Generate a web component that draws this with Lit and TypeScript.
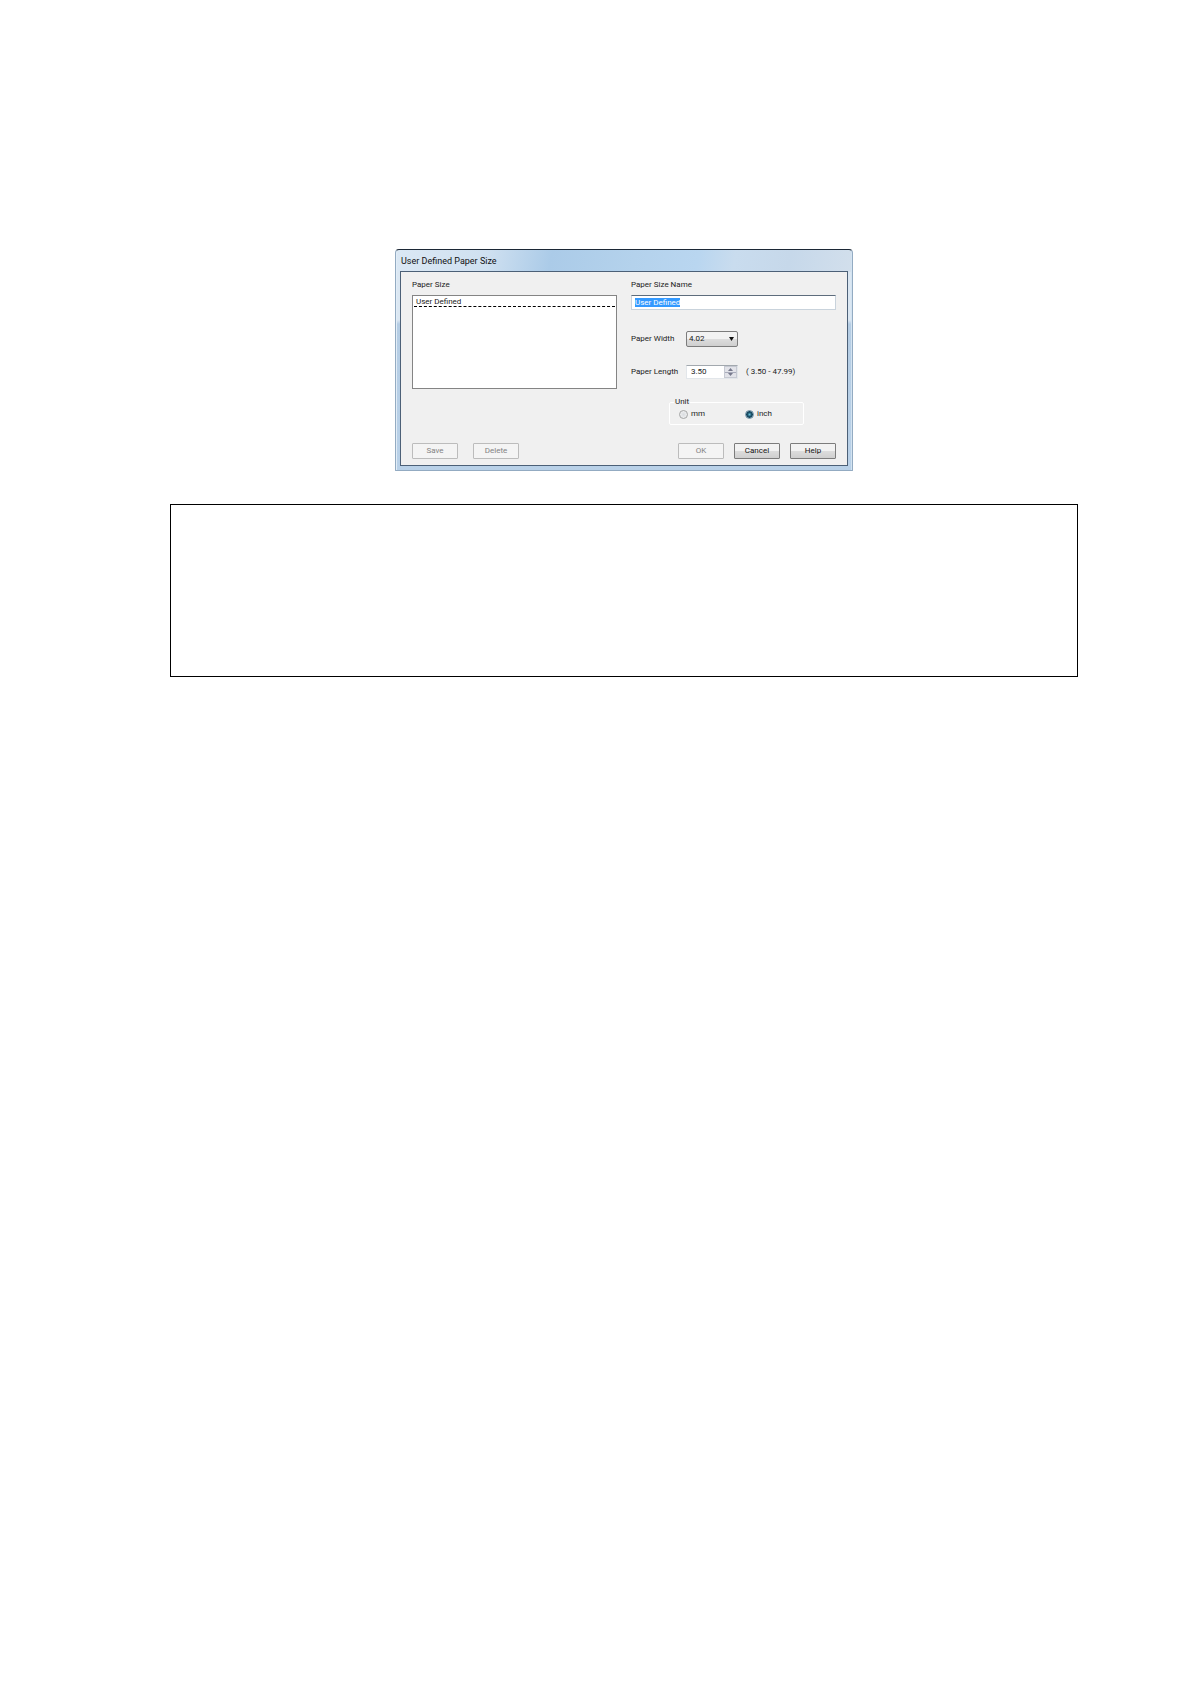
import { html, css, LitElement } from 'lit'
import { customElement, query } from 'lit/decorators.js'

@customElement('paper-size-dialog')
export class PaperSizeDialog extends LitElement {
  static styles = css`
    :host {
      display: block;
      font-family: Roboto, "Open Sans", sans-serif;
      font-size: 8px;
      line-height: 12px;
      color: #222;
    }

    * {
      box-sizing: border-box;
    }

    .window {
      border: 1px solid #93abc2;
      border-top: 1px solid #1c2836;
      border-radius: 4px 4px 1px 1px;
      padding: 0 4px 4px;
      background:
        linear-gradient(100deg, #dbe8f4 0, #cfe0f0 20%, #abcbe8 34%, #b4d2ec 52%, #b9d6f0 66%, #c9dcee 74%, #c6d8ea 86%, #d2dfec 100%) top / 100% 22px no-repeat,
        linear-gradient(#dbe7f2 70px, #b5cde4 74px, #b9d1e8);
      box-shadow: inset 1px 0 #e2edf7, inset -1px 0 #d3e3f1;
    }

    .title {
      margin: 0;
      padding: 5px 1px 4px;
      font-size: 9px;
      font-weight: 400;
      line-height: 12px;
      color: #111;
    }

    .client {
      border: 1px solid #4c6077;
      padding: 7px 11px 6px;
      background: #f0f0f0;
    }

    .columns {
      display: grid;
      grid-template-columns: 1fr 1fr;
      gap: 14px;
    }

    .column {
      display: flex;
      flex-direction: column;
    }

    input,
    select,
    button {
      margin: 0;
      font: inherit;
      color: inherit;
      outline: none;
    }

    .list {
      height: 94px;
      margin-top: 4px;
      padding: 1px;
      border: 1px solid #848484;
      border-radius: 0;
      background: #fff;
      overflow: hidden;
    }

    .list option {
      min-height: 0;
      padding: 0 2px;
      border-bottom: 1px dashed #000;
      line-height: 11px;
    }

    .name {
      height: 15px;
      margin: 4px 0 21px;
      padding: 0 3px;
      border: 1px solid #c9d3dc;
      border-top-color: #5d6c7c;
      background: #fff;
    }

    .name::selection {
      background: #3399ff;
      color: #fff;
    }

    .row {
      display: flex;
      align-items: center;
      height: 16px;
    }

    .row + .row {
      margin-top: 17px;
    }

    .row label {
      width: 55px;
    }

    .drop {
      position: relative;
      width: 52px;
      height: 16px;
    }

    .drop select {
      width: 100%;
      height: 100%;
      padding: 0 2px;
      border: 1px solid #7c7c7c;
      border-radius: 2px;
      appearance: none;
      background: linear-gradient(#f2f2f2 50%, #dddddd 50%, #cfcfcf);
    }

    .drop svg {
      position: absolute;
      right: 4px;
      top: 6px;
      pointer-events: none;
    }

    .spin {
      display: flex;
      width: 52px;
      height: 14px;
      border: 1px solid #e2e6ea;
      border-top-color: #a2a8ae;
      background: #fff;
    }

    .spin input {
      flex: 1;
      min-width: 0;
      padding: 0 4px;
      border: 0;
      background: none;
      appearance: textfield;
    }

    .spin input::-webkit-inner-spin-button {
      display: none;
    }

    .arrows {
      display: flex;
      flex-direction: column;
      width: 13px;
      border: 1px solid #c6c9d2;
      background: #e2e3e9;
    }

    .arrows button {
      display: flex;
      flex: 1;
      align-items: center;
      justify-content: center;
      min-height: 0;
      padding: 0;
      border: 0;
      background: none;
    }

    .arrows button + button {
      border-top: 1px solid #a9acbb;
    }

    .range {
      margin-left: 8px;
    }

    .unit {
      display: grid;
      grid-template-columns: 66px 1fr;
      width: 135px;
      height: 29px;
      min-width: 0;
      margin: 16px 0 0 38px;
      padding: 0 9px;
      border: 1px solid #fff;
      border-radius: 2px;
      outline: 1px solid #e6e6e6;
      outline-offset: -2px;
      outline: none;
    }

    .unit legend {
      margin-left: -5px;
      padding: 0 1px;
    }

    .unit label {
      display: flex;
      align-items: center;
      gap: 3px;
      height: 12px;
    }

    .unit input {
      width: 9px;
      height: 9px;
      border: 1px solid #a3a4a4;
      border-radius: 50%;
      appearance: none;
      background: radial-gradient(#d9dce0, #f6f6f6);
    }

    .unit input:checked {
      border-color: #6d8fa3;
      background: radial-gradient(circle, #6cc4dc 0, #1d5068 2px, #17475e 3px, #dceaf2 4px);
    }

    .actions {
      display: flex;
      gap: 10px;
      margin-top: 18px;
    }

    .actions button {
      width: 46px;
      height: 16px;
      padding: 0;
      border: 1px solid #7c7c7c;
      border-radius: 1px;
      background: linear-gradient(#f2f2f2 50%, #dddddd 50%, #cfcfcf);
      color: #111;
    }

    .actions button:disabled {
      border-color: #bcbcbc;
      background: #f4f4f4;
      color: #838383;
    }

    .actions .delete {
      margin: 0 auto 0 5px;
    }
  `

  @query('.name') nameInput!: HTMLInputElement
  @query('#length') lengthInput!: HTMLInputElement

  firstUpdated () {
    this.nameInput.focus()
    this.nameInput.select()
  }

  step (direction: number) {
    const next = Number(this.lengthInput.value) + direction * 0.01
    this.lengthInput.value = Math.min(47.99, Math.max(3.5, next)).toFixed(2)
  }

  renderActions () {
    return html`
      <div class="actions">
        <button type="button" disabled>Save</button>
        <button type="button" class="delete" disabled>Delete</button>
        <button type="button" disabled>OK</button>
        <button type="button">Cancel</button>
        <button type="button">Help</button>
      </div>
    `
  }

  render () {
    return html`
      <section class="window" role="dialog" aria-labelledby="title">
        <h1 class="title" id="title">User Defined Paper Size</h1>
        <div class="client">
          <div class="columns">
            <div class="column">
              <label for="sizes">Paper Size</label>
              <select class="list" id="sizes" size="4">
                <option>User Defined</option>
              </select>
            </div>
            <div class="column">
              <label for="name">Paper Size Name</label>
              <input class="name" id="name" type="text" value="User Defined">
              <div class="row">
                <label for="width">Paper Width</label>
                <div class="drop">
                  <select id="width">
                    <option>4.02</option>
                  </select>
                  <svg width="5" height="4" viewBox="0 0 5 4" aria-hidden="true">
                    <path d="M0 0h5L2.5 4z" fill="#111" />
                  </svg>
                </div>
              </div>
              <div class="row">
                <label for="length">Paper Length</label>
                <div class="spin">
                  <input id="length" type="number" min="3.50" max="47.99" step="0.01" value="3.50">
                  <div class="arrows">
                    <button type="button" aria-label="Increase" @click="${() => this.step(1)}">
                      <svg width="5" height="3" viewBox="0 0 5 3"><path d="M0 3h5L2.5 0z" fill="#77798c" /></svg>
                    </button>
                    <button type="button" aria-label="Decrease" @click="${() => this.step(-1)}">
                      <svg width="5" height="3" viewBox="0 0 5 3"><path d="M0 0h5L2.5 3z" fill="#77798c" /></svg>
                    </button>
                  </div>
                </div>
                <span class="range">( 3.50 - 47.99)</span>
              </div>
              <fieldset class="unit">
                <legend>Unit</legend>
                <label><input type="radio" name="unit" value="mm">mm</label>
                <label><input type="radio" name="unit" value="inch" checked>inch</label>
              </fieldset>
            </div>
          </div>
          ${this.renderActions()}
        </div>
      </section>
    `
  }
}

@customElement('app-root')
export class AppRoot extends LitElement {
  static styles = css`
    :host {
      display: block;
      min-height: 100vh;
      box-sizing: border-box;
      padding: 249px 112px 40px 170px;
      background: #fff;
    }

    paper-size-dialog {
      max-width: 458px;
      margin: 0 auto;
    }

    .note {
      box-sizing: border-box;
      min-height: 173px;
      margin-top: 33px;
      border: 1px solid #000;
    }
  `

  render () {
    return html`
      <paper-size-dialog></paper-size-dialog>
      <div class="note"></div>
    `
  }
}
